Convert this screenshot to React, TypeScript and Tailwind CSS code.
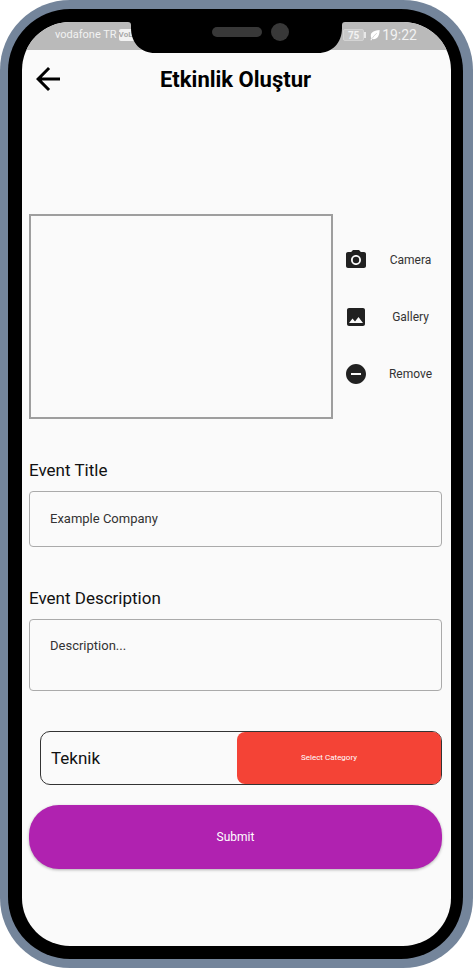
import { MdArrowBack, MdImage, MdPhotoCamera, MdRemoveCircle } from 'react-icons/md';
import type { IconType } from 'react-icons';

const imageActions: { label: string; Icon: IconType }[] = [
  { label: 'Camera', Icon: MdPhotoCamera },
  { label: 'Gallery', Icon: MdImage },
  { label: 'Remove', Icon: MdRemoveCircle },
];

function Notch() {
  return (
    <svg
      className="absolute inset-x-0 -top-px mx-auto h-[33px] w-[219px]"
      viewBox="0 0 219 33"
      aria-hidden="true"
    >
      <path d="M0 0H219V1H218C216 1 215 2 215 4V7C215 22 205 32 191 32H28C14 32 4 22 4 7V4C4 2 3 1 1 1H0Z" fill="#000" />
      <rect x="85" y="6" width="50" height="10" rx="5" fill="#383838" />
      <circle cx="153" cy="11" r="9" fill="#383838" />
    </svg>
  );
}

function Leaf() {
  return (
    <svg className="mr-0.5 ml-1 h-3 w-2.5" viewBox="0 0 10 12" aria-hidden="true">
      <path d="M9.6 1C5 1.400 1 2.600 .8 6.400C.7 7.600 1 8.600 1.500 9.300L.4 11L1.200 11.500L2.300 10.100C7 11 9.600 7 9.600 1Z" fill="#fff" />
      <path d="M2 9.600C3.300 7.400 4.800 5.800 6.800 4.200" stroke="#bababa" strokeWidth=".6" fill="none" />
    </svg>
  );
}

function StatusBar() {
  return (
    <div className="relative flex h-7 items-center justify-between bg-[#bababa] pr-[34px] pb-0.5 pl-[33px] text-white">
      <div className="flex items-center gap-0.5 text-[11px] leading-4 text-[#f2f2f2]">
        <span>vodafone TR</span>
        <span className="rounded-xs bg-[#f2f2f2] text-[8px] leading-3 font-bold text-[#aaaaaa]">VoLTE</span>
      </div>
      <div className="flex items-center">
        <span className="flex h-3 w-[21px] items-center justify-center rounded-xs border border-[#d4d4d4] bg-[#c8c8c8] text-[10px] font-bold text-[#f2f2f2]">
          75
        </span>
        <span className="h-1.5 w-0.5 bg-[#e8e8e8]" />
        <Leaf />
        <span className="text-sm leading-5 text-[#f2f2f2]">19:22</span>
      </div>
      <Notch />
    </div>
  );
}

export default function App() {
  return (
    <div className="flex min-h-screen flex-col rounded-[70px] bg-[#74859b] pt-[9px] pr-2.5 pb-[9px] pl-2 font-['Roboto','Noto_Sans',sans-serif]">
      <div className="flex grow flex-col rounded-[62px] bg-black pt-[13px] pr-3 pb-[13px] pl-3.5">
        <div className="flex grow flex-col overflow-hidden rounded-[48px] bg-[#fafafa]">
          <StatusBar />
          <header className="grid h-[58px] grid-cols-[40px_1fr_40px] items-center pr-2.5 pl-2">
            <button type="button" aria-label="Back" className="text-black">
              <MdArrowBack className="size-9" />
            </button>
            <h1 className="pt-0.5 text-center text-[22px] leading-7 font-bold text-black">Etkinlik Oluştur</h1>
          </header>

          <form className="mt-[106px] flex flex-col pr-[9px] pl-[7px]" onSubmit={(e) => e.preventDefault()}>
            <div className="flex">
              <div className="h-[205px] grow border-2 border-[#9e9e9e]" />
              <div className="flex w-[109px] shrink-0 flex-col justify-center">
                {imageActions.map(({ label, Icon }) => (
                  <button
                    key={label}
                    type="button"
                    className="grid h-[57px] grid-cols-[46px_1fr] items-center text-xs text-[#333333]"
                  >
                    <Icon className="mx-auto size-6 text-[#212121]" />
                    <span className="text-center">{label}</span>
                  </button>
                ))}
              </div>
            </div>

            <label htmlFor="event-title" className="mt-[39px] text-[17px] leading-6 text-[#111111]">
              Event Title
            </label>
            <input
              id="event-title"
              type="text"
              placeholder="Example Company"
              className="mt-[9px] h-14 rounded-sm border border-[#aaaaaa] bg-transparent px-5 pb-0.5 text-[13px] leading-5 text-[#333333] outline-none placeholder:text-[#333333]"
            />

            <label htmlFor="event-description" className="mt-[39px] text-[17px] leading-6 text-[#111111]">
              Event Description
            </label>
            <textarea
              id="event-description"
              placeholder="Description..."
              className="mt-[9px] h-[72px] resize-none rounded-sm border border-[#aaaaaa] bg-transparent px-5 py-4 text-[13px] leading-5 text-[#333333] outline-none placeholder:text-[#333333]"
            />

            <div className="mt-10 ml-[11px] flex h-[54px] items-stretch rounded-[10px] border border-[#333333]">
              <span className="flex grow items-center pl-2.5 text-[17px] leading-6 text-[#111111]">Teknik</span>
              <button
                type="button"
                className="w-[51%] shrink-0 rounded-lg bg-[#f44336] pr-5 text-[8px] leading-4 text-white"
              >
                Select Category
              </button>
            </div>

            <button
              type="submit"
              className="mt-5 h-16 rounded-[30px] bg-[#b022b0] text-xs text-white shadow-[0_1px_3px_rgba(0,0,0,0.3)]"
            >
              Submit
            </button>
          </form>
        </div>
      </div>
    </div>
  );
}
